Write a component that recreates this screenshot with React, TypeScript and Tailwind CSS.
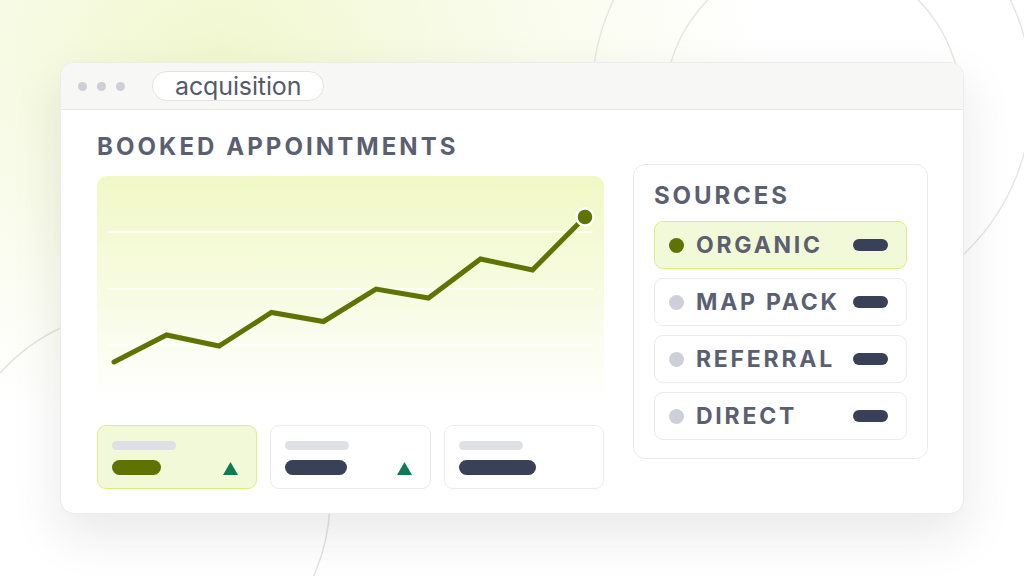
import React from "react";

const pts: [number, number][] = [
  [17, 186],
  [69.5, 159],
  [122, 170],
  [174.5, 136.5],
  [226.5, 145.5],
  [279, 113],
  [331.5, 122],
  [383.5, 83],
  [435.5, 94],
  [488, 41],
];

function Triangle() {
  return (
    <svg width="15" height="13" viewBox="0 0 15 13" className="block">
      <polygon points="7.5,0 15,13 0,13" fill="#0f7a56" />
    </svg>
  );
}

function StatCard({ active, barW, color, tri }: { active?: boolean; barW: number; color: string; tri?: boolean }) {
  return (
    <div
      className={
        "h-[64px] rounded-[9px] border pl-[14px] pr-[18px] pt-[15px] flex flex-col " +
        (active ? "bg-[#f2f9d9] border-[#dcef7e]" : "bg-white border-[#ebebeb]")
      }
    >
      <div className="h-[9px] w-[64px] rounded-full bg-[#dfe0e5]" />
      <div className="mt-[10px] flex items-end justify-between">
        <div className="h-[15px] rounded-full" style={{ width: barW, backgroundColor: color }} />
        {tri ? <Triangle /> : null}
      </div>
    </div>
  );
}

function SourceRow({ label, active }: { label: string; active?: boolean }) {
  return (
    <div
      className={
        "h-[48px] rounded-[9px] border flex items-center pl-[14px] pr-[18px] " +
        (active ? "bg-[#f2f9d9] border-[#dcef7e]" : "bg-white border-[#ebebeb]")
      }
    >
      <div className={"w-[15px] h-[15px] rounded-full " + (active ? "bg-[#5f7302]" : "bg-[#cdd0d8]")} />
      <div className="ml-[12px] text-[23px] leading-[23px] font-bold tracking-[0.12em] text-[#5a6071]">{label}</div>
      <div className="ml-auto h-[12px] w-[35px] rounded-full bg-[#394159]" />
    </div>
  );
}

export default function App() {
  const d = pts.map((p, i) => (i === 0 ? "M" : "L") + p[0] + " " + p[1]).join(" ");
  return (
    <div className="relative w-[1024px] h-[576px] overflow-hidden bg-white font-['Inter',sans-serif]">
      <div className="absolute inset-0 bg-[radial-gradient(ellipse_540px_380px_at_220px_50px,#f1f8cf_0%,rgba(243,248,214,0.65)_40%,rgba(255,255,255,0)_100%)]" />
      <svg className="absolute inset-0" width="1024" height="576" viewBox="0 0 1024 576" fill="none">
        <circle cx="813" cy="104" r="148" stroke="#e6e6e4" strokeWidth="1.5" />
        <circle cx="812" cy="95" r="220" stroke="#e6e6e4" strokeWidth="1.5" />
        <circle cx="141" cy="499" r="189" stroke="#e3e3e1" strokeWidth="1.5" />
      </svg>

      <div className="relative pt-[62px] pl-[60px]">
        <div className="w-[904px] h-[452px] rounded-[14px] bg-white border border-[#ececea] shadow-[0_20px_50px_rgba(30,30,30,0.1)] overflow-hidden">
          <div className="h-[47px] bg-[#f7f7f6] border-b border-[#e8e8e6] flex items-center pl-[17px]">
            <div className="flex gap-[10px]">
              <div className="w-[9px] h-[9px] rounded-full bg-[#cdcfd7]" />
              <div className="w-[9px] h-[9px] rounded-full bg-[#cdcfd7]" />
              <div className="w-[9px] h-[9px] rounded-full bg-[#cdcfd7]" />
            </div>
            <div className="ml-[27px] h-[30px] w-[172px] rounded-full border border-[#e3e3e1] bg-white flex items-center pl-[22px] text-[25px] leading-[25px] tracking-[-0.005em] text-[#545a6a]">
              acquisition
            </div>
          </div>

          <div className="flex items-start pl-[36px] pt-[25px]">
            <div className="w-[507px]">
              <div className="text-[24px] leading-[24px] font-bold tracking-[0.128em] text-[#5a6071]">BOOKED APPOINTMENTS</div>
              <div className="mt-[17px] h-[224px] rounded-[10px] bg-gradient-to-b from-[#f1f8c6] via-[#f7fbe0] to-[#ffffff]">
                <svg width="507" height="224" viewBox="0 0 507 224" fill="none" className="block">
                  <line x1="11" y1="56" x2="496" y2="56" stroke="#ffffff" strokeWidth="1.5" strokeOpacity="0.9" />
                  <line x1="11" y1="113" x2="496" y2="113" stroke="#ffffff" strokeWidth="1.5" strokeOpacity="0.9" />
                  <line x1="11" y1="169" x2="496" y2="169" stroke="#ffffff" strokeWidth="1.5" strokeOpacity="0.9" />
                  <path d={d} stroke="#5f7302" strokeWidth="5" strokeLinecap="round" strokeLinejoin="miter" />
                  <circle cx="488" cy="41" r="8.5" fill="#5f7302" stroke="#ffffff" strokeWidth="2.5" />
                </svg>
              </div>
              <div className="mt-[25px] grid grid-cols-3 gap-[13px]">
                <StatCard active barW={49} color="#5f7302" tri />
                <StatCard barW={62} color="#394159" tri />
                <StatCard barW={77} color="#394159" />
              </div>
            </div>

            <div className="ml-[29px] mt-[29px] w-[295px] h-[295px] rounded-[12px] border border-[#ebebea] bg-white px-[20px] pt-[19px]">
              <div className="text-[24px] leading-[24px] font-bold tracking-[0.12em] text-[#5a6071]">SOURCES</div>
              <div className="mt-[13px] flex flex-col gap-[9px]">
                <SourceRow label="ORGANIC" active />
                <SourceRow label="MAP PACK" />
                <SourceRow label="REFERRAL" />
                <SourceRow label="DIRECT" />
              </div>
            </div>
          </div>
        </div>
      </div>
    </div>
  );
}
